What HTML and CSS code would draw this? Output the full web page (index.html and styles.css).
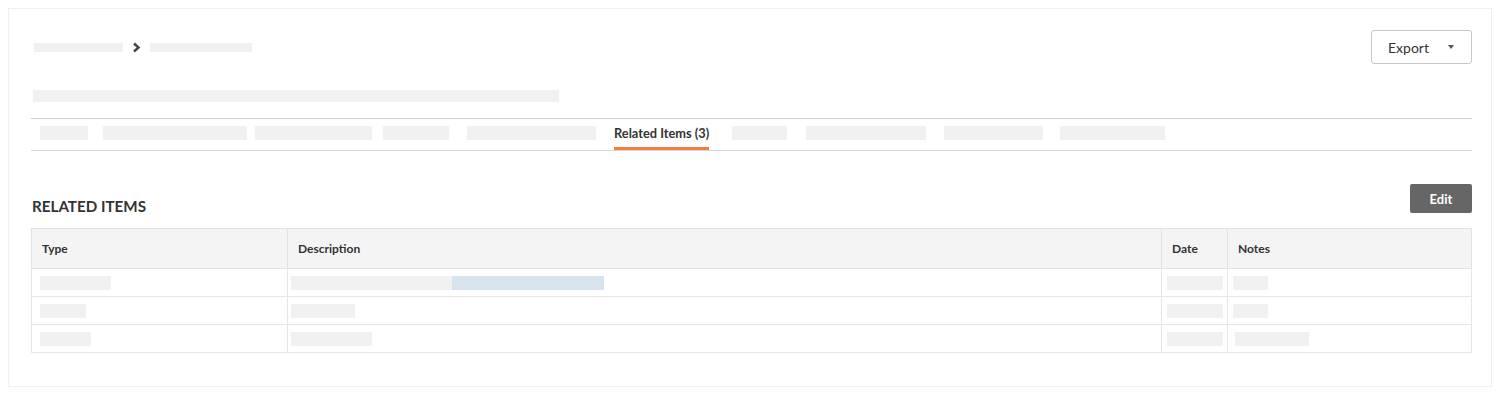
FILE: index.html
```html
<!DOCTYPE html>
<html>
<head>
    <meta charset="utf-8" />
    <link rel="stylesheet" href="styles.css">
</head>
<body>
    <div class="card">
        <div class="page-header">
            <div class="breadcrumbs">
                <span class="ph" style="width:89px"></span>
                <svg class="crumb-sep" width="9" height="11" viewBox="0 0 9 11">
                    <polyline points="2,1.5 6.5,5.5 2,9.5" fill="none" stroke="#444" stroke-width="2.4" />
                </svg>
                <span class="ph" style="width:102px"></span>
            </div>
            <button class="btn-export">Export <span class="caret"></span></button>
        </div>

        <div class="title ph" style="width:526px"></div>

        <div class="tabs">
            <div class="tab" style="margin-left:9px"><span class="ph" style="width:48px"></span></div>
            <div class="tab" style="margin-left:15px"><span class="ph" style="width:144px"></span></div>
            <div class="tab" style="margin-left:8px"><span class="ph" style="width:117px"></span></div>
            <div class="tab" style="margin-left:11px"><span class="ph" style="width:66px"></span></div>
            <div class="tab" style="margin-left:18px"><span class="ph" style="width:129px"></span></div>
            <div class="tab active" style="margin-left:18px">Related Items (3)</div>
            <div class="tab" style="margin-left:23px"><span class="ph" style="width:55px"></span></div>
            <div class="tab" style="margin-left:19px"><span class="ph" style="width:120px"></span></div>
            <div class="tab" style="margin-left:18px"><span class="ph" style="width:99px"></span></div>
            <div class="tab" style="margin-left:17px"><span class="ph" style="width:105px"></span></div>
        </div>

        <div class="section-head">
            <h2>RELATED ITEMS</h2>
            <button class="btn-edit">Edit</button>
        </div>

        <table class="grid">
            <colgroup>
                <col style="width:256px">
                <col>
                <col style="width:66px">
                <col style="width:244px">
            </colgroup>
            <thead>
                <tr>
                    <th>Type</th>
                    <th>Description</th>
                    <th>Date</th>
                    <th>Notes</th>
                </tr>
            </thead>
            <tbody>
                <tr>
                    <td><span class="ph cell-ph" style="width:71px;margin-left:4px"></span></td>
                    <td><span class="ph cell-ph" style="width:161px;margin-left:-1px"></span><span class="ph cell-ph link" style="width:152px"></span></td>
                    <td><span class="ph cell-ph" style="width:56px;margin-left:1px"></span></td>
                    <td><span class="ph cell-ph" style="width:35px;margin-left:1px"></span></td>
                </tr>
                <tr>
                    <td><span class="ph cell-ph" style="width:46px;margin-left:4px"></span></td>
                    <td><span class="ph cell-ph" style="width:64px;margin-left:-1px"></span></td>
                    <td><span class="ph cell-ph" style="width:56px;margin-left:1px"></span></td>
                    <td><span class="ph cell-ph" style="width:35px;margin-left:1px"></span></td>
                </tr>
                <tr>
                    <td><span class="ph cell-ph" style="width:51px;margin-left:4px"></span></td>
                    <td><span class="ph cell-ph" style="width:81px;margin-left:-1px"></span></td>
                    <td><span class="ph cell-ph" style="width:56px;margin-left:1px"></span></td>
                    <td><span class="ph cell-ph" style="width:74px;margin-left:3px"></span></td>
                </tr>
            </tbody>
        </table>
    </div>
</body>
</html>
```

FILE: styles.css
```css
body {
    margin: 8px;
    background: #fff;
    font-family: Lato, "Open Sans", sans-serif;
    color: #333;
}

.card {
    height: 379px;
    box-sizing: border-box;
    padding: 22px 20px 0 23px;
    background: #fff;
    border: 1px solid #f0f0f0;
    box-shadow: 0 0 3px rgba(0, 0, 0, 0.07);
}

/* placeholders for blurred text */
.ph {
    display: inline-block;
    height: 9px;
    background: #f1f1f1;
}

.page-header {
    display: flex;
    justify-content: space-between;
    align-items: center;
    margin-top: -1px;
    margin-right: -1px;
}

.breadcrumbs {
    display: flex;
    align-items: center;
    padding-left: 2px;
}

.crumb-sep {
    margin: 0 9px 0 9px;
}

.btn-export {
    width: 101px;
    height: 34px;
    padding: 0 0 0 16px;
    display: flex;
    align-items: center;
    border: 1px solid #c8c8c8;
    border-radius: 3px;
    background: #fff;
    font-family: inherit;
    font-size: 14px;
    color: #333;
    cursor: pointer;
}

.caret {
    margin-left: 19px;
    width: 0;
    height: 0;
    border-left: 3.5px solid transparent;
    border-right: 3.5px solid transparent;
    border-top: 4px solid #555;
}

.title {
    display: block;
    height: 12px;
    margin: 26px 0 16px 1px;
}

.tabs {
    display: flex;
    height: 31px;
    margin-left: -1px;
    margin-right: -1px;
    border-top: 1px solid #cfcfcf;
    border-bottom: 1px solid #d6d6d6;
}

.tab {
    display: flex;
    align-items: center;
    box-sizing: border-box;
    height: 31px;
    padding-bottom: 3px;
}

.tab .ph {
    height: 14px;
}

.tab.active {
    font-size: 12.8px;
    font-weight: bold;
    color: #333;
    padding-bottom: 0;
    border-bottom: 3px solid #f47c3c;
}

.section-head {
    display: flex;
    justify-content: space-between;
    align-items: flex-end;
    margin-top: 33px;
    margin-right: -1px;
}

.section-head h2 {
    margin: 0 0 -1px 0;
    font-size: 15.2px;
    line-height: 16px;
    font-weight: bold;
    color: #333;
}

.btn-edit {
    width: 62px;
    height: 29px;
    border: none;
    border-radius: 2px;
    background: #666;
    color: #fff;
    font-family: inherit;
    font-size: 13px;
    font-weight: bold;
    cursor: pointer;
}

.grid {
    width: calc(100% + 2px);
    margin: 15px 0 0 -1px;
    border-collapse: collapse;
    table-layout: fixed;
    border: 1px solid #dcdcdc;
}

.grid th {
    height: 39px;
    padding: 0 10px;
    background: #f4f4f4;
    text-align: left;
    font-size: 12px;
    font-weight: bold;
    color: #333;
    border: 1px solid #e2e2e2;
}

.grid td {
    height: 27px;
    padding: 0 4px;
    border: 1px solid #e6e6e6;
    line-height: 0;
    white-space: nowrap;
}

.cell-ph {
    height: 14px;
    vertical-align: middle;
}

.cell-ph.link {
    background: #d7e3ee;
}
```
